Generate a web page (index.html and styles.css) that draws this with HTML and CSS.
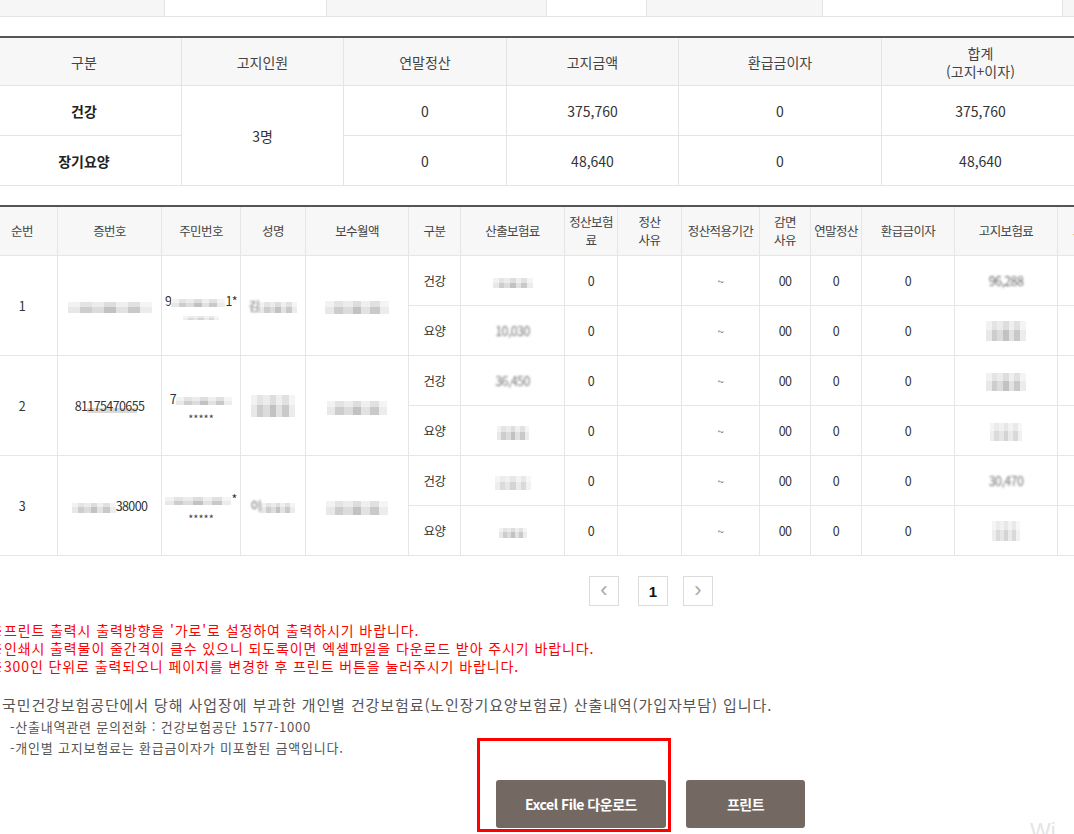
FILE: index.html
```html
<!DOCTYPE html>
<html lang="ko">
<head>
<meta charset="utf-8">
<title>개인별 산출내역</title>
<link rel="stylesheet" href="styles.css">
</head>
<body>
<div class="page">
  <div class="strip">
    <div class="sc g"></div><div class="sc"></div><div class="sc g"></div><div class="sc"></div><div class="sc g"></div><div class="sc"></div><div class="sc g"></div>
  </div>

  <table class="sum">
    <colgroup><col class="s1"><col class="s2"><col class="s3"><col class="s4"><col class="s5"><col class="s6"></colgroup>
    <thead>
      <tr><th>구분</th><th>고지인원</th><th>연말정산</th><th>고지금액</th><th>환급금이자</th><th>합계<br><span class="sub">(고지+이자)</span></th></tr>
    </thead>
    <tbody>
      <tr><td class="b">건강</td><td rowspan="2">3명</td><td>0</td><td>375,760</td><td>0</td><td>375,760</td></tr>
      <tr><td class="b">장기요양</td><td>0</td><td>48,640</td><td>0</td><td>48,640</td></tr>
    </tbody>
  </table>

  <table class="det">
    <colgroup>
      <col class="d1"><col class="d2"><col class="d3"><col class="d4"><col class="d5"><col class="d6"><col class="d7"><col class="d8"><col class="d9"><col class="d10"><col class="d11"><col class="d12"><col class="d13"><col class="d14"><col class="d15">
    </colgroup>
    <thead>
      <tr>
        <th>순번</th><th>증번호</th><th>주민번호</th><th>성명</th><th>보수월액</th><th>구분</th><th>산출보험료</th><th>정산보험<br>료</th><th>정산<br>사유</th><th>정산적용기간</th><th>감면<br>사유</th><th>연말정산</th><th>환급금이자</th><th>고지보험료</th><th class="cut">고지금액</th>
      </tr>
    </thead>
    <tbody>
      <tr>
        <td rowspan="2">1</td>
        <td rowspan="2"><span class="bl w84"></span></td>
        <td rowspan="2"><div class="two"><span>9<span class="bl w54 h8"></span>1*</span><span class="bl w36 h4 lt"></span></div></td>
        <td rowspan="2"><span class="fz">김</span><span class="bl w38"></span></td>
        <td rowspan="2"><span class="bl w64 h13"></span></td>
        <td>건강</td><td><span class="bl w40 h10"></span></td><td>0</td><td></td><td class="t">~</td><td>00</td><td>0</td><td>0</td><td><span class="fz">96,288</span></td><td></td>
      </tr>
      <tr>
        <td>요양</td><td><span class="fz2">10,030</span></td><td>0</td><td></td><td class="t">~</td><td>00</td><td>0</td><td>0</td><td><span class="bl w40 h20"></span></td><td></td>
      </tr>
      <tr>
        <td rowspan="2">2</td>
        <td rowspan="2"><span class="smear">81175470655</span></td>
        <td rowspan="2"><div class="two"><span>7<span class="bl w56 h8"></span></span><span class="star">*****</span></div></td>
        <td rowspan="2"><span class="bl w44 h22"></span></td>
        <td rowspan="2"><span class="bl w60 h14"></span></td>
        <td>건강</td><td><span class="fz2">36,450</span></td><td>0</td><td></td><td class="t">~</td><td>00</td><td>0</td><td>0</td><td><span class="bl w40 h18"></span></td><td></td>
      </tr>
      <tr>
        <td>요양</td><td><span class="bl w32 h14"></span></td><td>0</td><td></td><td class="t">~</td><td>00</td><td>0</td><td>0</td><td><span class="bl w32 h18 lt"></span></td><td></td>
      </tr>
      <tr>
        <td rowspan="2">3</td>
        <td rowspan="2"><span class="bl w44 h10"></span>38000</td>
        <td rowspan="2"><div class="two"><span><span class="bl w66 h8"></span>*</span><span class="star">*****</span></div></td>
        <td rowspan="2"><span class="fz">이</span><span class="bl w34 h10"></span></td>
        <td rowspan="2"><span class="bl w62 h14"></span></td>
        <td>건강</td><td><span class="bl w36 h14 lt"></span></td><td>0</td><td></td><td class="t">~</td><td>00</td><td>0</td><td>0</td><td><span class="fz2">30,470</span></td><td></td>
      </tr>
      <tr>
        <td>요양</td><td><span class="bl w28 h10"></span></td><td>0</td><td></td><td class="t">~</td><td>00</td><td>0</td><td>0</td><td><span class="bl w28 h20 lt"></span></td><td></td>
      </tr>
    </tbody>
  </table>

  <div class="paging">
    <a class="pg arrow">&#8249;</a>
    <a class="pg cur">1</a>
    <a class="pg arrow">&#8250;</a>
  </div>

  <div class="warn">
    <p>※프린트 출력시 출력방향을 '가로'로 설정하여 출력하시기 바랍니다.</p>
    <p>※인쇄시 출력물이 줄간격이 클수 있으니 되도록이면 엑셀파일을 다운로드 받아 주시기 바랍니다.</p>
    <p>※300인 단위로 출력되오니 페이지를 변경한 후 프린트 버튼을 눌러주시기 바랍니다.</p>
  </div>

  <div class="notes">
    <p class="lead">국민건강보험공단에서 당해 사업장에 부과한 개인별 건강보험료(노인장기요양보험료) 산출내역(가입자부담) 입니다.</p>
    <p class="item">-산출내역관련 문의전화 : 건강보험공단 1577-1000</p>
    <p class="item">-개인별 고지보험료는 환급금이자가 미포함된 금액입니다.</p>
  </div>

  <div class="btns">
    <button class="btn xl">Excel File 다운로드</button>
    <button class="btn pr">프린트</button>
  </div>
</div>
<div class="mark"></div>
<div class="wm">Wi</div>
</body>
</html>
```

FILE: styles.css
```css
html, body {
  margin: 0;
  padding: 0;
  overflow: hidden;
  background: #fff;
}
body {
  width: 1074px;
  height: 834px;
  position: relative;
  font-family: "Noto Sans CJK KR", "Noto Sans", sans-serif;
  color: #333;
}
.page {
  margin-left: -14px;
  width: 1180px;
}
p { margin: 0; }

/* top strip (bottom of a scrolled table) */
.strip {
  display: grid;
  grid-template-columns: 179px 162px 220px 100px 176px 240px 103px;
  height: 16px;
  border-bottom: 1px solid #e4e4e4;
}
.sc { border-right: 1px solid #e4e4e4; background: #fff; }
.sc.g { background: #f6f6f6; }

/* summary table */
table { border-collapse: collapse; table-layout: fixed; }
.sum {
  margin-top: 19px;
  width: 1093px;
  border-top: 2px solid #555;
  font-size: 14px;
}
.s1 { width: 195px; } .s2 { width: 162px; } .s3 { width: 163px; }
.s4 { width: 172px; } .s5 { width: 203px; } .s6 { width: 198px; }
.sum th, .sum td {
  border: 1px solid #e4e4e4;
  text-align: center;
  padding: 0;
  color: #333;
}
.sum th {
  height: 47px;
  background: #f7f7f7;
  font-weight: normal;
  color: #444;
  line-height: 18px;
}
.sum td { height: 49px; }
.sum td.b { font-weight: bold; color: #222; }
.sum .sub { font-size: 14px; }

/* detail table */
.det {
  margin-top: 19px;
  width: 1159px;
  border-top: 2px solid #555;
  font-size: 12.5px;
  letter-spacing: -0.6px;
}
.d1 { width: 71px; } .d2 { width: 104px; } .d3 { width: 79px; } .d4 { width: 65px; }
.d5 { width: 103px; } .d6 { width: 52px; } .d7 { width: 104px; } .d8 { width: 53px; }
.d9 { width: 64px; } .d10 { width: 78px; } .d11 { width: 51px; } .d12 { width: 51px; }
.d13 { width: 93px; } .d14 { width: 103px; } .d15 { width: 90px; }
.det th, .det td {
  border: 1px solid #e6e6e6;
  text-align: center;
  padding: 0;
  color: #333;
}
.det th {
  height: 48px;
  background: #f7f7f7;
  font-weight: normal;
  color: #444;
  line-height: 18px;
}
.det th.cut { text-align: left; padding-left: 15px; }
.det td { height: 49px; }
.det td.t { font-size: 11px; color: #555; }

.two { display: flex; flex-direction: column; align-items: center; gap: 6px; }
.star { font-size: 11px; letter-spacing: 0; color: #444; line-height: 8px; }

/* blurred (masked) data */
.bl {
  display: inline-block;
  vertical-align: middle;
  height: 11px;
  background:
    linear-gradient(rgba(255,255,255,0.45) 0 45%, rgba(255,255,255,0) 45%),
    linear-gradient(90deg, #e8e8e8 0 14%, #cdcdcd 14% 28%, #dcdcdc 28% 43%, #c2c2c2 43% 57%, #e2e2e2 57% 71%, #c9c9c9 71% 86%, #ececec 86%);
}
.bl.lt { opacity: 0.7; }
.w28 { width: 28px; } .w32 { width: 32px; } .w34 { width: 34px; } .w36 { width: 36px; }
.w38 { width: 38px; } .w40 { width: 40px; } .w44 { width: 44px; } .w54 { width: 54px; }
.w56 { width: 56px; } .w60 { width: 60px; } .w62 { width: 62px; } .w64 { width: 64px; }
.w66 { width: 66px; } .w84 { width: 84px; }
.h4 { height: 4px; } .h8 { height: 8px; } .h10 { height: 10px; } .h13 { height: 13px; }
.h14 { height: 14px; } .h18 { height: 18px; } .h20 { height: 20px; } .h22 { height: 22px; }
.fz { filter: blur(1.2px); color: #666; }
.fz2 { filter: blur(0.9px); color: #777; }
.smear {
  background: linear-gradient(transparent 0 62%, #d8d8d8 62% 90%, transparent 90%) no-repeat 12px 0 / 50px 100%;
}

/* pagination */
.paging {
  display: flex;
  align-items: center;
  margin-top: 20px;
  padding-left: 603px;
  height: 30px;
}
.pg {
  box-sizing: border-box;
  width: 30px;
  height: 30px;
  border: 1px solid #dcdcdc;
  display: flex;
  align-items: center;
  justify-content: center;
  font-family: "Liberation Sans", Arial, sans-serif;
  text-decoration: none;
}
.pg.arrow { color: #aaa; font-size: 22px; line-height: 1; padding-bottom: 3px; }
.pg.cur { color: #111; font-weight: bold; font-size: 15px; margin: 0 15px 0 19px; }

/* red warnings */
.warn {
  margin-top: 15px;
  padding-left: 3px;
  color: #ff0000;
  font-size: 14px;
  letter-spacing: 0.9px;
  line-height: 18px;
}

/* notes */
.notes {
  margin-top: 19px;
  padding-left: 16px;
  color: #555;
}
.notes .lead { font-size: 15px; line-height: 22px; letter-spacing: 0.9px; }
.notes .item { font-size: 13px; line-height: 21px; padding-left: 8px; letter-spacing: 0.8px; }

/* buttons */
.btns {
  display: flex;
  gap: 20px;
  margin-top: 22px;
  padding-left: 510px;
}
.btn {
  height: 48px;
  border: 0;
  border-radius: 3px;
  background: #746862;
  color: #fff;
  font-family: "Noto Sans CJK KR", "Noto Sans", sans-serif;
  font-weight: bold;
  font-size: 14px;
  letter-spacing: -0.5px;
  padding: 0;
}
.btn.xl { width: 170px; }
.btn.pr { width: 119px; }

/* annotation overlay */
.mark {
  position: absolute;
  left: 477px;
  top: 738px;
  width: 188px;
  height: 88px;
  border: 3px solid #ff0000;
}
.wm {
  position: absolute;
  left: 1030px;
  top: 818px;
  font-family: "Liberation Sans", Arial, sans-serif;
  font-size: 22px;
  color: #e4e4e4;
}
```
